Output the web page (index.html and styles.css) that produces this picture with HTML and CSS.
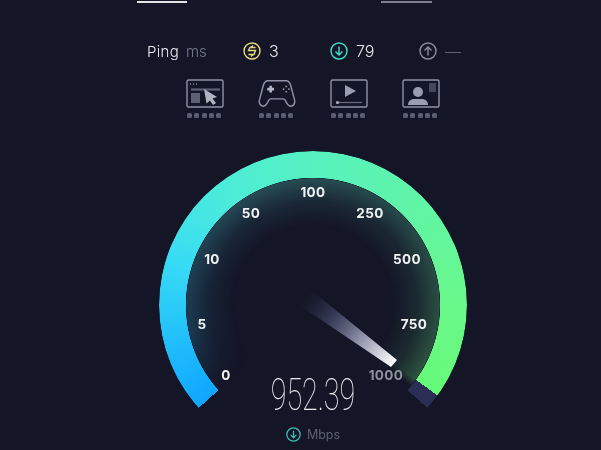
FILE: index.html
```html
<!DOCTYPE html>
<html lang="en">
<head>
    <meta charset="UTF-8">
    <meta name="viewport" content="width=device-width, initial-scale=1.0">
    <title>Speed Test</title>
    <link rel="stylesheet" href="styles.css">
</head>
<body>
    <!-- Tabs -->
    <div class="tabs">
        <span class="tab tab-active"></span>
        <span class="tab"></span>
    </div>

    <!-- Results -->
    <div class="stats">
        <div class="stat"><span class="ping">Ping</span><span class="unit">ms</span></div>
        <div class="stat">
            <svg class="stat-icon" viewBox="0 0 18 18" fill="none" stroke="#e6dc7c" stroke-width="1.4">
                <circle cx="9" cy="9" r="8"/>
                <path d="M12.5 5.5H7L5.5 8.5H12.5L11 12.5H5.5M10 3.5L7.5 5.5M8 14.5L10.5 12.5"/>
            </svg>
            <span class="val">3</span>
        </div>
        <div class="stat">
            <svg class="stat-icon" viewBox="0 0 18 18" fill="none" stroke="#3fe0cc" stroke-width="1.4">
                <circle cx="9" cy="9" r="8"/>
                <path d="M9 4.5V13M5.5 9.5L9 13L12.5 9.5"/>
            </svg>
            <span class="val">79</span>
        </div>
        <div class="stat">
            <svg class="stat-icon" viewBox="0 0 18 18" fill="none" stroke="#8a8d9c" stroke-width="1.4">
                <circle cx="9" cy="9" r="8"/>
                <path d="M9 13.5V5M5.5 8.5L9 5L12.5 8.5"/>
            </svg>
            <span class="val val-dim">—</span>
        </div>
    </div>

    <!-- Quality icons -->
    <div class="apps">
        <div class="app">
            <svg class="app-icon" viewBox="0 0 38 29" fill="none" stroke="#8f92a6" stroke-width="1.4">
                <rect x="1" y="1" width="36" height="27" rx="1.5"/>
                <path d="M4 5H5M7 5H8M10 5H11" stroke-width="1.6"/>
                <path d="M5 10.5H34" stroke-width="2.2" opacity=".6"/>
                <rect x="5" y="14" width="9" height="10" fill="#8f92a6" stroke="none" opacity=".6"/>
                <path d="M18 10L31 18L26.500 19.500L30 24L27 26L24 21.500L20.500 24.500Z" fill="#b0b3c2" stroke="none"/>
            </svg>
            <div class="dots"><i></i><i></i><i></i><i></i><i></i></div>
        </div>
        <div class="app">
            <svg class="app-icon" viewBox="0 0 39 29" fill="none" stroke="#8f92a6" stroke-width="1.5">
                <path d="M10 1.500H29C31.500 1.500 32.500 3 33.500 6L37.500 21C38.500 25 36 27.500 33.500 27.500C31 27.500 29.500 25 28 21.500C27.500 20.500 27 20 26 20H13C12 20 11.500 20.500 11 21.500C9.500 25 8 27.500 5.500 27.500C3 27.500 .5 25 1.500 21L5.500 6C6.500 3 7.500 1.500 10 1.500Z"/>
                <path d="M13 6.500V13.500M9.500 10H16.500" stroke="#b4b7c6" stroke-width="2.600"/>
                <path d="M29 6.500V8M29 12V13.500M25.500 10H27M31 10H32.500" stroke-width="1.800"/>
            </svg>
            <div class="dots"><i></i><i></i><i></i><i></i><i></i></div>
        </div>
        <div class="app">
            <svg class="app-icon" viewBox="0 0 38 29" fill="none" stroke="#8f92a6" stroke-width="1.4">
                <rect x="1" y="1" width="36" height="27" rx="1.500"/>
                <path d="M15 6L26 12L15 18Z" fill="#9a9db0" stroke="none"/>
                <path d="M9 23.500H32" stroke-width="1.200" opacity=".7"/>
                <circle cx="7.500" cy="23.500" r="1.500" fill="#b4b7c6" stroke="none"/>
            </svg>
            <div class="dots"><i></i><i></i><i></i><i></i><i></i></div>
        </div>
        <div class="app">
            <svg class="app-icon" viewBox="0 0 38 29" fill="none" stroke="#8f92a6" stroke-width="1.4">
                <rect x="1" y="1" width="36" height="27" rx="1.500"/>
                <circle cx="16" cy="13" r="5" fill="#9a9db0" stroke="none"/>
                <path d="M6 26C6 22 9 20 12 20H20C23 20 26 22 26 26Z" fill="#9a9db0" stroke="none"/>
                <rect x="27" y="4" width="7" height="9" fill="#45485a" stroke="none"/>
            </svg>
            <div class="dots"><i></i><i></i><i></i><i></i><i></i></div>
        </div>
    </div>

    <!-- Gauge -->
    <div class="gauge">
        <div class="glow"></div>
        <div class="ring"></div>
        <svg class="needle" viewBox="0 0 308 308">
            <defs>
                <linearGradient id="needleFade" gradientUnits="userSpaceOnUse" x1="146" y1="145" x2="236" y2="213">
                    <stop offset="0" stop-color="#2c3150" stop-opacity="0"/>
                    <stop offset=".3" stop-color="#454a6a" stop-opacity=".7"/>
                    <stop offset=".62" stop-color="#8f92a8"/>
                    <stop offset=".86" stop-color="#d8d9e2"/>
                    <stop offset="1" stop-color="#ffffff"/>
                </linearGradient>
            </defs>
            <polygon points="152,139 238,209 232,216 140,154" fill="url(#needleFade)"/>
        </svg>
        <span class="tick tick-0">0</span>
        <span class="tick tick-5">5</span>
        <span class="tick tick-10">10</span>
        <span class="tick tick-50">50</span>
        <span class="tick tick-100">100</span>
        <span class="tick tick-250">250</span>
        <span class="tick tick-500">500</span>
        <span class="tick tick-750">750</span>
        <span class="tick tick-1000">1000</span>
        <div class="readout">
            <div class="speed">952.39</div>
            <div class="speed-unit">
                <svg class="unit-icon" viewBox="0 0 18 18" fill="none" stroke="#3fbfb4" stroke-width="1.5">
                    <circle cx="9" cy="9" r="8"/>
                    <path d="M9 4.500V13M5.500 9.500L9 13L12.500 9.500"/>
                </svg>
                <span>Mbps</span>
            </div>
        </div>
    </div>
</body>
</html>
```

FILE: styles.css
```css
body {
    margin: 0;
    width: 601px;
    height: 450px;
    overflow: hidden;
    background-color: #141526;
    font-family: Inter, "Open Sans", sans-serif;
    color: #e8e9ee;
}
.tabs {
    display: flex;
    gap: 194px;
    padding: 1px 0 0 137px;
}
.tab {
    width: 51px;
    height: 2px;
    background-color: #7d7f90;
}
.tab-active {
    width: 50px;
    background-color: #e4e4e8;
}
.stats {
    display: grid;
    grid-template-columns: 96px 87px 89px auto;
    align-items: center;
    height: 20px;
    margin-top: 38px;
    padding-left: 147px;
    filter: blur(.3px);
}
.stat {
    display: flex;
    align-items: center;
}
.ping {
    font-size: 15px;
    font-weight: 300;
    letter-spacing: .3px;
    margin-right: 7px;
}
.unit {
    font-size: 15px;
    font-weight: 300;
    color: #777a8a;
}
.stat-icon {
    width: 18px;
    height: 18px;
    margin-right: 8px;
}
.val {
    font-size: 16px;
    font-weight: 300;
}
.val-dim {
    color: #5e6172;
}
.apps {
    display: flex;
    gap: 34px;
    margin-top: 18px;
    padding-left: 186px;
    filter: blur(.4px);
}
.app {
    width: 38px;
}
.app-icon {
    display: block;
    width: 38px;
    height: 29px;
}
.dots {
    display: flex;
    gap: 2.300px;
    margin-top: 5px;
    padding-left: 1px;
}
.dots i {
    width: 5px;
    height: 5px;
    background-color: #5a5d70;
    border-radius: 1.500px;
}
.gauge {
    position: relative;
    width: 308px;
    height: 308px;
    margin: 33px 0 0 159px;
    filter: blur(.3px);
}
.ring {
    position: absolute;
    inset: 0;
    border-radius: 50%;
    background: conic-gradient(from 228deg,
        #10a6ff 0deg, #1fbcfb 25deg, #38dcf4 60deg, #4cecd8 95deg,
        #56f2c0 132deg, #60f4a8 175deg, #68f88a 222deg, #66fa78 258deg,
        #2a2e55 258deg, #2a2e55 264deg, transparent 264deg);
    -webkit-mask: radial-gradient(circle closest-side, transparent 82.400%, #000 82.800%);
    mask: radial-gradient(circle closest-side, transparent 82.400%, #000 82.800%);
}
.glow {
    position: absolute;
    inset: 27px;
    border-radius: 50%;
    background: conic-gradient(from 228deg,
        rgba(20, 21, 38, 0) 0deg, rgba(40, 130, 170, .35) 30deg, rgba(70, 170, 170, .38) 110deg,
        rgba(80, 190, 150, .32) 180deg, rgba(100, 220, 120, .32) 258deg, rgba(20, 21, 38, 0) 262deg);
    -webkit-mask: radial-gradient(circle closest-side, transparent 62%, rgba(0, 0, 0, .35) 82%, #000 100%);
    mask: radial-gradient(circle closest-side, transparent 62%, rgba(0, 0, 0, .35) 82%, #000 100%);
}
.needle {
    position: absolute;
    inset: 0;
}
.tick {
    position: absolute;
    transform: translate(-50%, -50%);
    font-size: 13.500px;
    font-weight: 700;
    letter-spacing: .4px;
    color: #f2f3f5;
}
.tick-0 { left: 67px; top: 224px; }
.tick-5 { left: 43px; top: 173px; }
.tick-10 { left: 53px; top: 108px; }
.tick-50 { left: 92px; top: 62px; }
.tick-100 { left: 154px; top: 41px; }
.tick-250 { left: 211px; top: 62px; }
.tick-500 { left: 248px; top: 108px; }
.tick-750 { left: 255px; top: 173px; }
.tick-1000 { left: 227px; top: 224px; color: #8d8f9e; }
.readout {
    position: absolute;
    left: 0;
    right: 0;
    top: 220px;
    display: flex;
    flex-direction: column;
    align-items: center;
}
.speed {
    font-family: Roboto, sans-serif;
    font-size: 44px;
    font-weight: 100;
    line-height: 48px;
    transform: scaleX(.65);
}
.speed-unit {
    display: flex;
    align-items: center;
    gap: 6px;
    margin-top: 8px;
    font-size: 12.500px;
    color: #5e6172;
}
.unit-icon {
    width: 15px;
    height: 15px;
}
```
